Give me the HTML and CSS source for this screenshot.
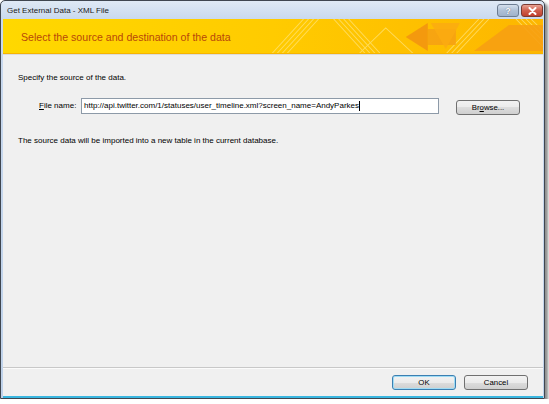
FILE: index.html
```html
<!DOCTYPE html>
<html lang="en">
<head>
    <meta charset="UTF-8">
    <title>Get External Data - XML File</title>
    <link rel="stylesheet" href="styles.css">
</head>
<body>
    <div class="window">
        <div class="titlebar">
            <span class="title">Get External Data - XML File</span>
            <div class="caption-buttons">
                <span class="cap-btn help">?</span>
                <span class="cap-btn close">
                    <svg width="9" height="8" viewBox="0 0 9 8">
                        <path d="M1.5 1 L7.5 7 M7.5 1 L1.5 7" stroke="#fff" stroke-width="2" stroke-linecap="round"/>
                    </svg>
                </span>
            </div>
        </div>
        <div class="client">
            <div class="banner">
                <svg class="banner-art" viewBox="0 0 539 35" preserveAspectRatio="none">
                    <defs>
                        <linearGradient id="bg" x1="0" x2="1" y1="0" y2="0">
                            <stop offset="0" stop-color="#ffd800"/>
                            <stop offset="0.5" stop-color="#ffcb00"/>
                            <stop offset="1" stop-color="#fdb600"/>
                        </linearGradient>
                    </defs>
                    <rect width="539" height="35" fill="url(#bg)"/>
                    <g stroke="#ffe680" stroke-width="1" opacity="0.7" fill="none">
                        <path d="M268 35 L300 0 M273 35 L305 0 M278 35 L310 0 M283 35 L315 0"/>
                        <path d="M330 0 L362 35 M335 0 L367 35 M340 0 L372 35 M345 0 L377 35"/>
                        <path d="M355 35 L382 9 L410 35"/>
                        <path d="M442 35 L475 0 M447 35 L480 0 M452 35 L485 0"/>
                        <path d="M512 0 L539 28 M517 0 L539 22 M522 0 L539 17 M527 0 L539 12"/>
                    </g>
                    <polygon points="402,18 424,4 424,32" fill="#f39510" opacity="0.9"/>
                    <rect x="424" y="10" width="28" height="16" fill="#f6a014" opacity="0.85"/>
                    <polygon points="427,4 456,4 442,30" fill="#fbab10" opacity="0.85"/>
                    <polygon points="470,32 505,6 539,6 539,32" fill="#f7a012" opacity="0.9"/>
                    <path d="M0 34.5 H539" stroke="#f7b400" stroke-width="1"/>
                </svg>
                <span class="banner-text">Select the source and destination of the data</span>
            </div>
            <div class="content">
                <p class="intro">Specify the source of the data.</p>
                <div class="file-row">
                    <label class="file-label" for="file"><u>F</u>ile name:</label>
                    <div class="file-input">http://api.twitter.com/1/statuses/user_timeline.xml?screen_name=AndyParkes<span class="caret"></span></div>
                    <button class="btn browse">Br<u>o</u>wse...</button>
                </div>
                <p class="note">The source data will be imported into a new table in the current database.</p>
            </div>
            <div class="footer">
                <button class="btn ok">OK</button>
                <button class="btn">Cancel</button>
            </div>
        </div>
    </div>
</body>
</html>
```

FILE: styles.css
```css
/* Page */
body {
    margin: 0;
    background: #ffffff;
    font-family: "Liberation Sans", Arial, sans-serif;
    font-size: 8px;
    color: #000;
}

/* Window frame */
.window {
    width: 543px;
    height: 397px;
    border: 1px solid #3f4650;
    border-radius: 5px 5px 0 0;
    background: linear-gradient(#dfe9f5, #c9d9ee 18px, #bfd2ea);
    box-shadow: 3px 3px 3px rgba(0, 0, 0, 0.45);
    display: flex;
    flex-direction: column;
}

/* Title bar */
.titlebar {
    height: 17px;
    display: flex;
    align-items: center;
    justify-content: space-between;
    padding: 0 1px 0 6px;
}

.title {
    font-size: 8px;
    color: #1a1a1a;
    margin-top: 2px;
}

.caption-buttons {
    display: flex;
    align-self: flex-start;
    margin-top: 3px;
    gap: 2px;
}

.cap-btn {
    width: 20px;
    height: 11px;
    display: flex;
    align-items: center;
    justify-content: center;
    border: 1px solid #6d7d92;
    border-radius: 3px;
}

.cap-btn.help {
    background: linear-gradient(#d5e0ed, #b0c1d6 50%, #9fb2cb);
    color: #fff;
    font-size: 9px;
    font-weight: bold;
    text-shadow: 0 0 1px #44556b;
}

.cap-btn.close {
    background: linear-gradient(#e8a394, #d0604d 50%, #c0402e);
    border-color: #7a3b32;
}

/* Client area */
.client {
    flex: 1;
    margin: 1px 1px 0 2px;
    background: #f0f0f0;
    border-bottom: 2px solid #39b6e0;
    display: flex;
    flex-direction: column;
}

/* Yellow banner */
.banner {
    position: relative;
    height: 35px;
    display: flex;
    align-items: center;
    border-bottom: 1px solid #dcdcdc;
}

.banner-art {
    position: absolute;
    left: 0;
    top: 0;
    width: 100%;
    height: 100%;
}

.banner-text {
    position: relative;
    margin-left: 18px;
    font-size: 10.6px;
    color: #b8480a;
}

/* Main content */
.content {
    flex: 1;
    padding-left: 15px;
}

.intro {
    margin: 18px 0 0;
    line-height: 9px;
}

.file-row {
    display: flex;
    align-items: flex-start;
    margin-top: 16px;
}

.file-label {
    width: 42px;
    margin-left: 21px;
    line-height: 16px;
    white-space: nowrap;
}

.file-input {
    width: 352px;
    height: 14px;
    line-height: 14px;
    padding: 0 2px;
    background: #fff;
    border: 1px solid #8d9aa8;
    white-space: nowrap;
    overflow: hidden;
    font-size: 8px;
}

.caret {
    display: inline-block;
    width: 1px;
    height: 10px;
    background: #000;
    vertical-align: middle;
}

.note {
    margin: 21px 0 0;
    line-height: 9px;
}

/* Buttons */
.btn {
    width: 64px;
    height: 15px;
    padding: 0;
    font-family: "Liberation Sans", Arial, sans-serif;
    font-size: 7.8px;
    color: #000;
    border: 1px solid #707070;
    border-radius: 3px;
    background: linear-gradient(#f2f2f2, #ebebeb 50%, #dddddd 50%, #cfcfcf);
}

.browse {
    margin-left: 17px;
    margin-top: 2px;
}

.ok {
    border-color: #3c7fb1;
    box-shadow: inset 0 0 0 1px #9fdcf5;
}

/* Bottom button bar */
.footer {
    height: 28px;
    border-top: 1px solid #c8c8c8;
    box-shadow: inset 0 1px 0 #fbfbfb;
    display: flex;
    justify-content: flex-end;
    align-items: center;
    gap: 8px;
    padding-right: 15px;
}
```
